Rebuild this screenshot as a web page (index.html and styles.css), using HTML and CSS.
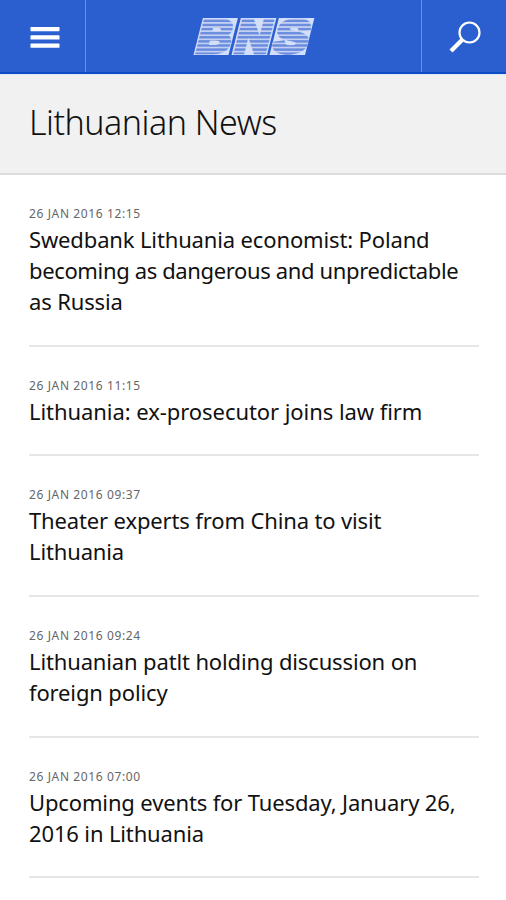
FILE: index.html
```
<!DOCTYPE html>
<html lang="en">
<head>
    <meta charset="UTF-8" />
    <meta name="viewport" content="width=device-width, initial-scale=1">
    <title>BNS - Lithuanian News</title>
    <link rel="stylesheet" href="styles.css">
</head>
<body>
<header class="topbar">
    <button class="topbar-btn menu-btn" aria-label="Menu">
        <svg width="30" height="24" viewBox="0 0 30 24">
            <rect x="0.5" y="1" width="29" height="4.2" rx="0.6" fill="#fff"/>
            <rect x="0.5" y="9.3" width="29" height="4.2" rx="0.6" fill="#fff"/>
            <rect x="0.5" y="17.6" width="29" height="4.2" rx="0.6" fill="#fff"/>
        </svg>
    </button>
    <a class="logo" href="#" aria-label="BNS">
        <svg width="122" height="72" viewBox="0 0 122 72">
            <defs>
                <pattern id="stripes" y="-37" width="4" height="4.1" patternUnits="userSpaceOnUse">
                    <rect width="4" height="4.1" fill="#c3d0f3"/>
                    <rect y="1.7" width="4" height="2.4" fill="#6a8cdd"/>
                </pattern>
            </defs>
            <!-- slanted plates with striped letters on top -->
            <g class="logo-text" transform="translate(0.5 55) skewX(-14.2)">
                <rect x="0" y="-37" width="35" height="37" fill="#d3def8"/>
                <rect x="38" y="-37" width="35.5" height="37" fill="#d3def8"/>
                <rect x="76" y="-37" width="35.5" height="37" fill="#d3def8"/>
                <text x="0.5" y="-3" textLength="33.5" lengthAdjust="spacingAndGlyphs">B</text>
                <text x="38.7" y="-3" textLength="34" lengthAdjust="spacingAndGlyphs">N</text>
                <text x="77" y="-3" textLength="34" lengthAdjust="spacingAndGlyphs">S</text>
            </g>
        </svg>
    </a>
    <button class="topbar-btn search-btn" aria-label="Search">
        <svg width="34" height="34" viewBox="0 0 34 34">
            <circle cx="20.5" cy="12.5" r="10" fill="none" stroke="#fff" stroke-width="2.2"/>
            <path d="M13 20L2 31" stroke="#fff" stroke-width="4.2"/>
        </svg>
    </button>
</header>
<div class="page-title">
    <h1>Lithuanian News</h1>
</div>
<main class="news-list">
    <article class="news-item">
        <time>26 JAN 2016 12:15</time>
        <h2>Swedbank Lithuania economist: Poland<br><span class="tight">becoming as dangerous and unpredictable</span><br>as Russia</h2>
    </article>
    <article class="news-item">
        <time>26 JAN 2016 11:15</time>
        <h2 class="loose">Lithuania: ex-prosecutor joins law firm</h2>
    </article>
    <article class="news-item">
        <time>26 JAN 2016 09:37</time>
        <h2>Theater experts from China to visit<br>Lithuania</h2>
    </article>
    <article class="news-item">
        <time>26 JAN 2016 09:24</time>
        <h2>Lithuanian patlt holding discussion on<br>foreign policy</h2>
    </article>
    <article class="news-item">
        <time>26 JAN 2016 07:00</time>
        <h2>Upcoming events for Tuesday, January 26,<br>2016 in Lithuania</h2>
    </article>
</main>
</body>
</html>
```
FILE: styles.css
```
body {
    margin: 0;
    background: #fff;
    color: #111;
    font-family: 'Noto Sans', sans-serif;
}
.topbar {
    display: flex;
    box-sizing: border-box;
    height: 74px;
    background: #2b5fd0;
    border-bottom: 2px solid #0f4cc8;
}
.topbar-btn {
    display: flex;
    align-items: center;
    justify-content: center;
    box-sizing: border-box;
    width: 86px;
    padding: 0;
    border: none;
    background: none;
    cursor: pointer;
}
.menu-btn {
    border-right: 1px solid #6a90e2;
    padding: 4px 0 0 5px;
}
.search-btn {
    width: 85px;
    border-left: 1px solid #6a90e2;
    padding: 2px 0 0 3px;
}
.logo {
    flex: 1;
    display: flex;
    align-items: center;
    justify-content: center;
}
.logo-text {
    font-family: 'Liberation Sans', sans-serif;
    font-size: 45px;
    font-weight: 700;
}
.logo-text text {
    fill: url(#stripes);
    stroke: url(#stripes);
    stroke-width: 4.5px;
}
.page-title {
    box-sizing: border-box;
    height: 101px;
    padding: 25px 29px 0;
    background: #f1f1f1;
    border-top: 1px solid #dfe7f7;
    border-bottom: 2px solid #dcdcdc;
}
h1 {
    margin: -1px 0 0;
    font-size: 34px;
    font-weight: 300;
    line-height: 46px;
    letter-spacing: -0.5px;
}
.news-list {
    padding: 0 27px 0 29px;
}
.news-item {
    padding: 30px 0 27.7px;
    border-bottom: 2px solid #e6e6e6;
}
.news-item:first-child {
    padding-bottom: 27.6px;
}
time {
    display: block;
    color: #666;
    font-size: 12px;
    line-height: 17px;
    letter-spacing: 0.62px;
    padding-bottom: 2px;
}
h2 {
    margin: 0;
    font-size: 22px;
    font-weight: 400;
    line-height: 31px;
    letter-spacing: -0.14px;
    white-space: nowrap;
}
.tight {
    letter-spacing: -0.36px;
}
.loose {
    letter-spacing: -0.06px;
}
```
